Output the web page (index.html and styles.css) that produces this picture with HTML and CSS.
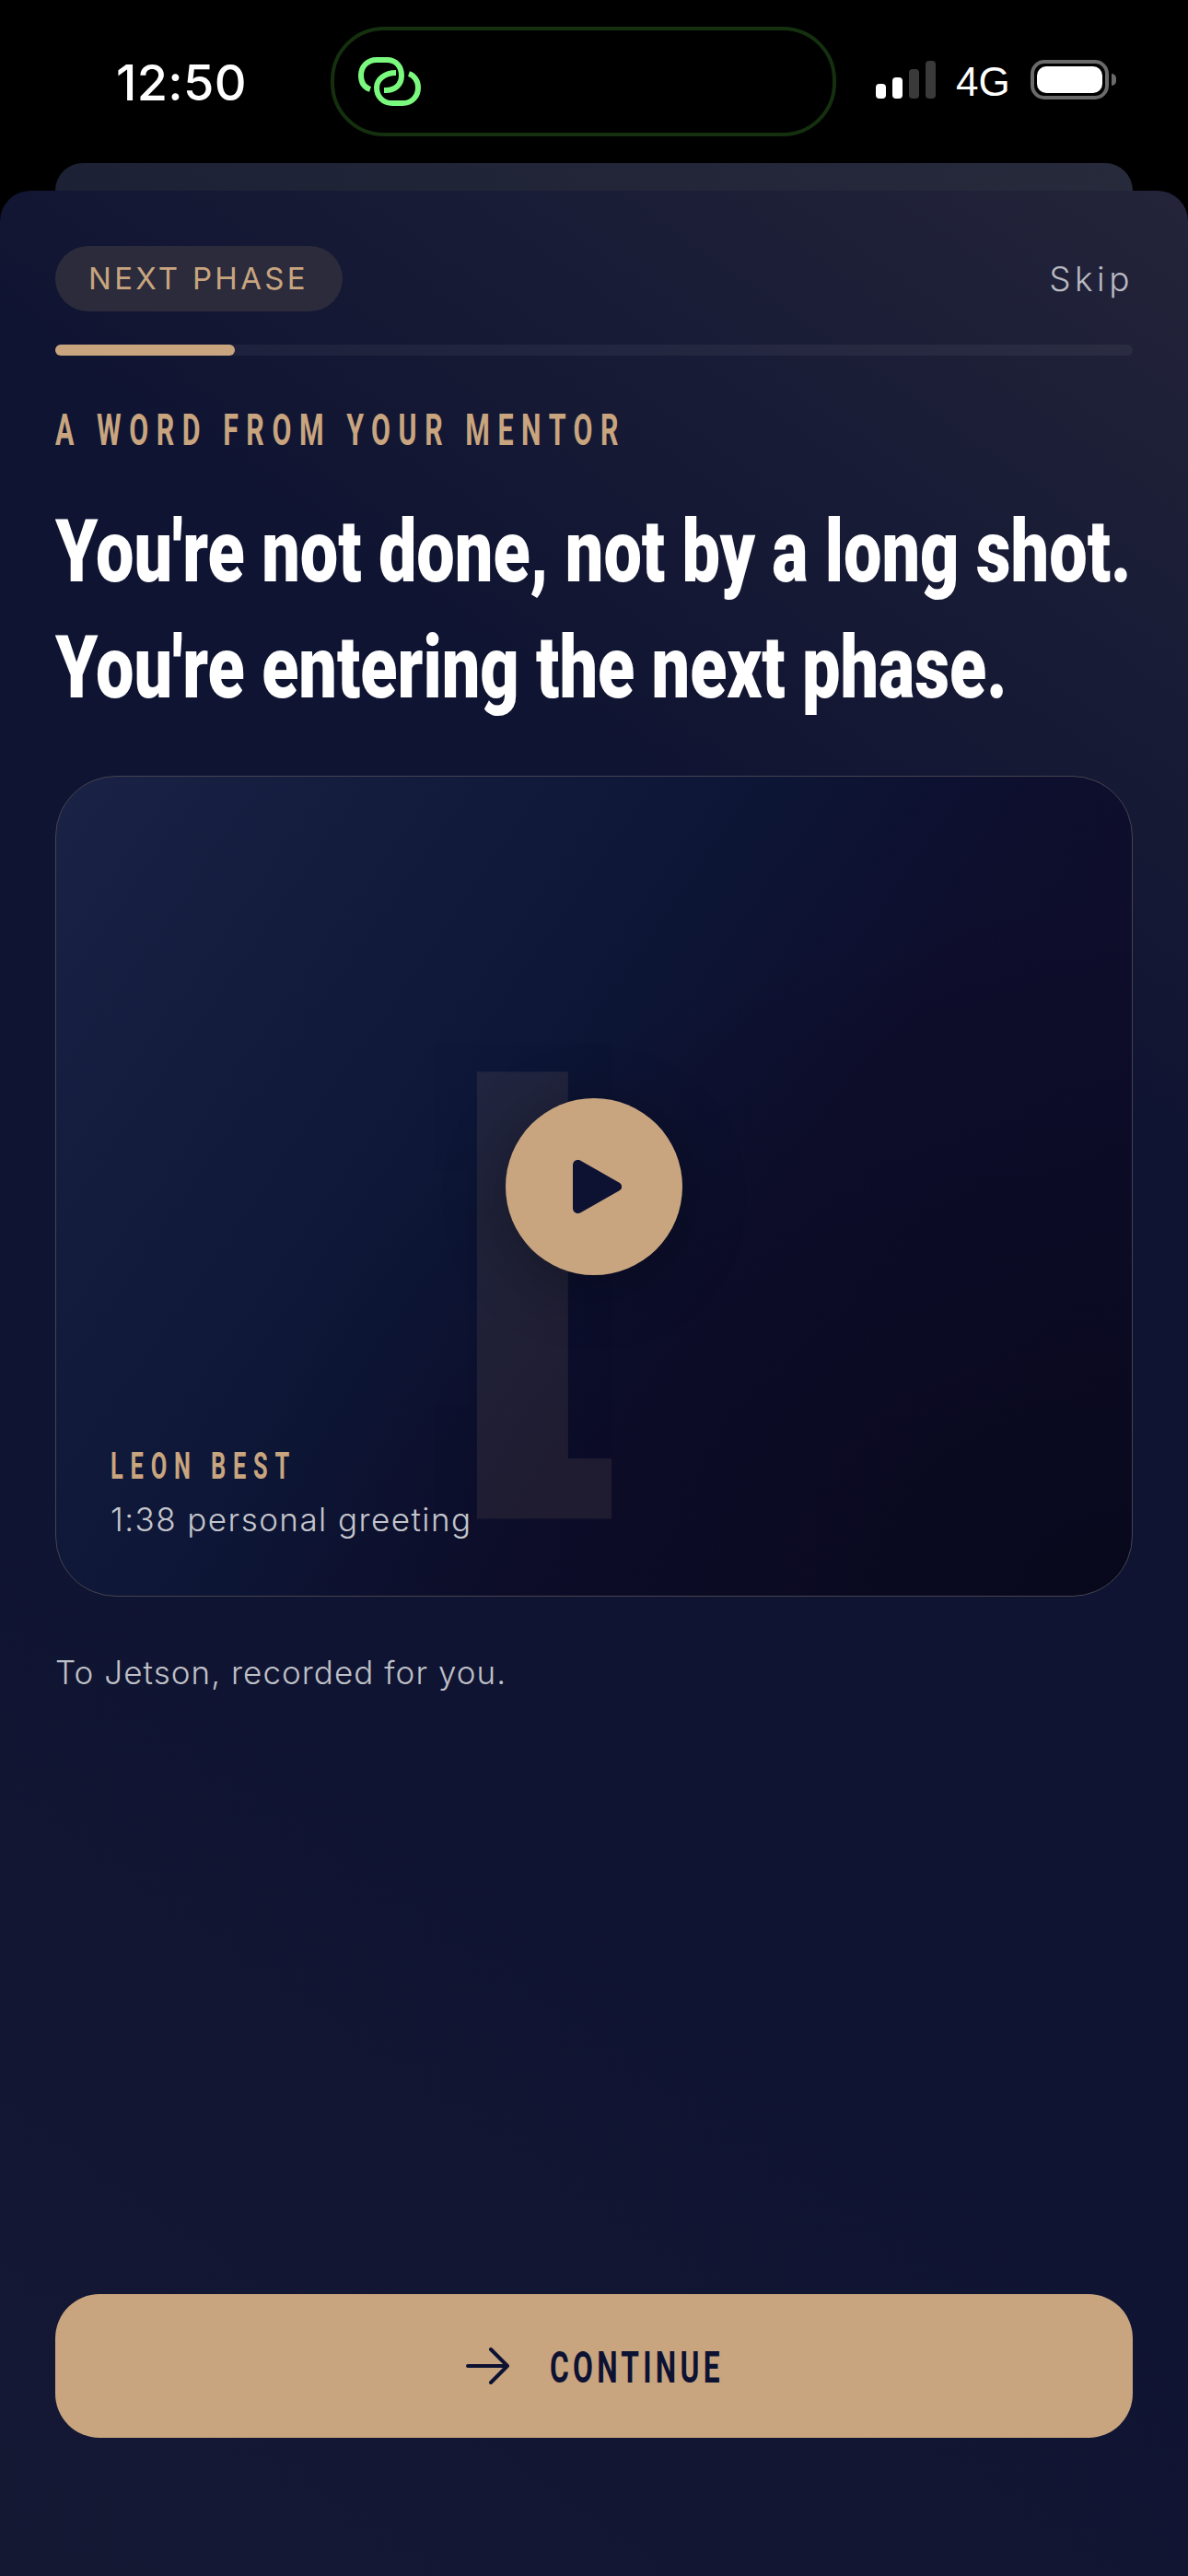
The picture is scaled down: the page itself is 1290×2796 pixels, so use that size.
FILE: index.html
```html
<!DOCTYPE html>
<html lang="en">
<head>
<meta charset="utf-8">
<title>Next phase</title>
<link rel="stylesheet" href="styles.css">
</head>
<body>
<div class="screen">
  <header class="status">
    <div class="time">12:50</div>
    <div class="island">
      <svg class="link-icon" viewBox="0 0 68 53" width="68" height="53" fill="none" stroke="#7af97e" stroke-width="6">
        <path d="M13 35C7 33 3 28 3 20C3 10 10 3 20 3H31C41 3 47 10 47 20C47 30 40 36 30 36H28"/>
        <path d="M41 17C29 17 20 24 20 33C20 43 27 50 37 50H48C58 50 65 43 65 33C65 26 61 20 55 18"/>
      </svg>
    </div>
    <div class="status-right">
      <div class="signal">
        <span class="bar bar-1"></span>
        <span class="bar bar-2"></span>
        <span class="bar bar-3"></span>
        <span class="bar bar-4"></span>
      </div>
      <div class="net">4G</div>
      <div class="battery"><span class="battery-level"></span></div>
      <span class="battery-nub"></span>
    </div>
  </header>
  <div class="back-card"></div>
  <main class="sheet">
    <div class="top-row">
      <span class="pill">NEXT PHASE</span>
      <span class="skip">Skip</span>
    </div>
    <div class="progress"><div class="progress-fill"></div></div>
    <p class="eyebrow"><span class="cond">A WORD FROM YOUR MENTOR</span></p>
    <h1 class="headline"><span class="cond">You're not done, not by a long shot.</span><br><span class="cond">You're entering the next phase.</span></h1>
    <section class="video">
      <span class="monogram">L</span>
      <button class="play" aria-label="Play">
        <svg viewBox="0 0 53 60" width="53" height="60"><path d="M0 7C0 2 4 0 8 1.500L51 26C54 28 54 32 51 34L8 58.500C4 60 0 58 0 53Z" fill="#0d1233"/></svg>
      </button>
      <div class="video-meta">
        <div class="video-name"><span class="cond">LEON BEST</span></div>
        <div class="video-sub">1:38 personal greeting</div>
      </div>
    </section>
    <p class="note">To Jetson, recorded for you.</p>
    <button class="continue">
      <svg viewBox="0 0 48 40" width="48" height="40" fill="none" stroke="#0d1233" stroke-width="4" stroke-linecap="round" stroke-linejoin="round"><path d="M2 20H45M27 2L45 20L27 38"/></svg>
      <span class="continue-label"><span class="cond">CONTINUE</span></span>
    </button>
  </main>
</div>
</body>
</html>
```
FILE: styles.css
```css
* { box-sizing: border-box; }
html, body { margin: 0; padding: 0; background: #000; }
.screen { width: 1290px; height: 2796px; display: flex; flex-direction: column; overflow: hidden; }

.status { height: 177px; display: flex; padding: 29px 0 0 126px; font-family: "Liberation Sans", sans-serif; color: #fff; }
.time { width: 233px; padding-top: 30px; font-family: "Inter", sans-serif; font-size: 54px; line-height: 62px; font-weight: 500; letter-spacing: .3px; }
.island { width: 549px; height: 119px; border: 4px solid #14300e; border-radius: 58px; padding: 29px 0 0 26px; }
.link-icon { display: block; }
.status-right { display: flex; align-items: flex-start; margin-left: 43px; padding-top: 36px; }
.signal { display: flex; align-items: flex-end; gap: 7px; height: 42px; width: 65px; }
.bar { width: 11px; border-radius: 4px; background: #fff; }
.bar-1 { height: 16px; }
.bar-2 { height: 23px; }
.bar-3 { height: 32px; background: #3a3a3a; }
.bar-4 { height: 41px; background: #3a3a3a; }
.net { width: 81px; margin-left: 22px; font-size: 44px; line-height: 48px; }
.battery { width: 85px; height: 43px; border: 4px solid #6a6a6a; border-radius: 15px; padding: 3px; }
.battery-level { display: block; height: 100%; background: #fff; border-radius: 10px; }
.battery-nub { width: 5px; height: 13px; margin: 15px 0 0 3px; background: #6a6a6a; border-radius: 0 6px 6px 0; }

.back-card { height: 30px; margin: 0 60px; border-radius: 30px 30px 0 0; background: linear-gradient(90deg, #1d2135, #272a3b); }
.sheet { flex: 1; display: flex; flex-direction: column; padding: 60px 60px 150px; border-radius: 33px 33px 0 0;
  background:
    linear-gradient(215deg, rgba(48,46,62,.62) 0%, rgba(48,46,62,0) 30%),
    linear-gradient(35deg, rgba(40,40,58,.22) 0%, rgba(40,40,58,0) 35%),
    #0f1432; }

.cond { display: inline-block; white-space: nowrap; transform-origin: 0 50%; font-family: "Roboto", sans-serif; }

.top-row { display: flex; justify-content: space-between; align-items: center; height: 71px; }
.pill { height: 71px; width: 312px; padding-left: 36px; border-radius: 36px; background: #2b2b3b; color: #c8a57f; font-family: "Inter", sans-serif; font-size: 33px; line-height: 71px; letter-spacing: 3.300px; }
.skip { color: #b9bac2; font-family: "Inter", sans-serif; font-weight: 300; font-size: 37px; letter-spacing: 4.500px; margin-right: -1px; }

.progress { height: 12px; margin-top: 36px; border-radius: 6px; background: rgba(255,255,255,.05); }
.progress-fill { width: 195px; height: 12px; border-radius: 6px; background: #c8a57f; }

.eyebrow { margin: 56px 0 0; height: 50px; color: #c8a57f; font-size: 49px; line-height: 50px; font-weight: 700; }
.eyebrow .cond { transform: scaleX(.62); letter-spacing: 13.800px; }

.headline { margin: 44px 0 0; color: #fff; font-size: 95px; line-height: 125px; font-weight: 900; }
.headline .cond { transform: scaleX(.776); }

.video { position: relative; height: 891px; margin-top: 54px; border: 1.500px solid #45434f; border-radius: 66px; overflow: hidden;
  display: flex; align-items: center; justify-content: center;
  background:
    radial-gradient(ellipse at 100% 100%, rgba(5,6,20,.6) 0%, rgba(5,6,20,0) 60%),
    linear-gradient(125deg, #1a2245 0%, #0d1636 42%, #0e0e2d 62%, #0d0c29 100%); }
.monogram { position: absolute; left: 411px; top: 289px; width: 204px; height: 560px; color: #c8a57f; opacity: .1; font-family: "Liberation Sans", sans-serif; font-weight: 700; font-size: 728px; line-height: 560px; overflow: hidden; transform: scaleX(.943); transform-origin: 0 0; clip-path: inset(0 0 43.400px 0); }
.play { position: relative; width: 192px; height: 192px; padding: 0 0 0 7px; border: 0; border-radius: 50%; background: #c8a57f; display: flex; align-items: center; justify-content: center; box-shadow: 0 12px 70px rgba(0,0,0,.3); }
.video-meta { position: absolute; left: 59px; bottom: 58px; }
.video-name { color: #c8a57f; font-weight: 700; font-size: 41px; line-height: 44px; }
.video-name .cond { transform: scaleX(.62); letter-spacing: 12.600px; }
.video-sub { margin-top: 11px; color: #c5c6cc; font-family: "Inter", sans-serif; font-weight: 300; font-size: 35px; line-height: 50px; letter-spacing: 1.450px; white-space: nowrap; }

.note { margin: 57px 0 0; color: #c0c1c8; font-family: "Inter", sans-serif; font-weight: 300; font-size: 35px; line-height: 50px; letter-spacing: 1.050px; }

.continue { margin-top: auto; height: 156px; border: 0; border-radius: 48px; background: #c8a57f; display: flex; align-items: center; justify-content: center; gap: 43px; padding: 0; }
.continue-label { width: 188px; padding-top: 4px; color: #0d1233; font-weight: 700; font-size: 48px; line-height: 50px; text-align: left; }
.continue-label .cond { transform: scaleX(.66); letter-spacing: 6.500px; }
```
